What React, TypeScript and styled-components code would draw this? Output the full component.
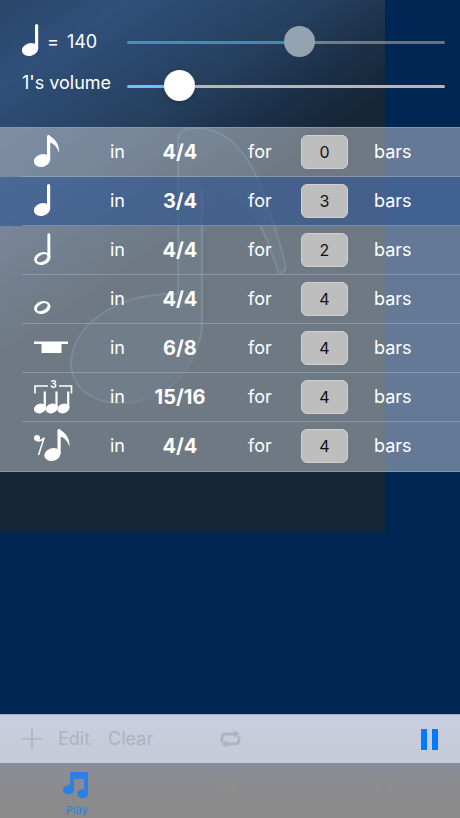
import React, { useState } from 'react';
import styled, { createGlobalStyle } from 'styled-components';

const GlobalStyle = createGlobalStyle`
  * { box-sizing: border-box; }
  body {
    margin: 0;
    background: #002654;
    color: #fff;
    font-family: Inter, 'Liberation Sans', sans-serif;
    font-size: 18px;
    line-height: 24px;
  }
  button, input { font: inherit; color: inherit; }
`;

const Page = styled.div`
  position: relative;
  isolation: isolate;
  display: flex;
  flex-direction: column;
  min-height: 100vh;
`;

const Backdrop = styled.svg`
  position: absolute;
  z-index: -1;
  top: 0;
  left: 0;
  width: 385px;
  height: 532px;
  background: linear-gradient(146deg, #2a4569 0%, #304f79 11%, #2c4a70 17%, #253f5d 28%, #1b3048 37%, #152636 45%);
`;

const Controls = styled.section`
  padding: 20px 15px 19px 22px;
`;

const ControlRow = styled.div`
  display: grid;
  grid-template-columns: 105px 1fr;
  align-items: center;
  height: 44px;
`;

const ControlLabel = styled.label<{ $raised?: boolean }>`
  display: flex;
  align-items: center;
  gap: 8px;
  white-space: nowrap;
  padding-bottom: ${(p) => (p.$raised ? 6 : 0)}px;
`;

const TempoNote = styled.svg`
  width: 17px;
  height: 36px;
  margin-bottom: 2px;
`;

const Slider = styled.input`
  appearance: none;
  width: 100%;
  height: 32px;
  margin: 0;
  background: transparent;

  &::-webkit-slider-runnable-track {
    height: 3px;
    border-radius: 2px;
    background: linear-gradient(to right, #67c4f5 var(--fill), #b9b7b5 var(--fill));
  }
  &::-webkit-slider-thumb {
    appearance: none;
    width: 31px;
    height: 31px;
    margin-top: -15px;
    border-radius: 50%;
    background: #fff;
    box-shadow: 0 2px 6px rgba(0, 0, 0, 0.2);
  }
  &:disabled { opacity: 0.54; }
  &:disabled::-webkit-slider-thumb {
    background: #f4faff;
    box-shadow: none;
  }
`;

const RowList = styled.ul`
  list-style: none;
  margin: 0;
  padding: 0;
  border-bottom: 1px solid #8497a9;
  border-top: 1px solid #8497a9;
`;

const Row = styled.li<{ $active: boolean }>`
  position: relative;
  display: grid;
  grid-template-columns: 76fr 16fr 122fr 53fr 73fr 86fr;
  align-items: center;
  height: 49px;
  padding-left: 34px;
  padding-bottom: 1px;
  background: ${(p) => (p.$active ? 'rgba(84, 116, 166, 0.76)' : 'rgba(222, 224, 228, 0.45)')};

  &:not(:last-child)::after {
    content: '';
    position: absolute;
    left: 22px;
    right: 0;
    bottom: 0;
    height: 1px;
    background: rgba(165, 182, 204, 0.5);
  }
`;

const NoteIcon = styled.svg`
  width: 40px;
  height: 36px;
  fill: #fff;
`;

const Signature = styled.button`
  padding: 0 14px 0 0;
  border: 0;
  background: none;
  font-size: 20px;
  font-weight: 700;
`;

const BarCount = styled.input`
  width: 47px;
  height: 34px;
  padding: 0;
  border: 1px solid #d0d0d0;
  border-radius: 6px;
  background: #bebebe;
  color: #111;
  font-size: 16px;
  text-align: center;
`;

const Toolbar = styled.div`
  display: flex;
  align-items: center;
  height: 49px;
  margin-top: auto;
  padding: 0 22px;
  border-top: 1px solid #a0a9bd;
  background: linear-gradient(#c8cfe1, #c6cad6);
`;

const ToolButton = styled.button<{ $gap?: number }>`
  display: flex;
  padding: 0;
  margin-left: ${(p) => p.$gap ?? 0}px;
  border: 0;
  background: none;
  color: #007aff;

  &:disabled { color: #adb3c0; }
`;

const Spacer = styled.div<{ $grow: number }>`
  flex: ${(p) => p.$grow} 1 0;
`;

const TabBar = styled.nav`
  display: grid;
  grid-template-columns: repeat(3, 1fr);
  height: 55px;
  background: linear-gradient(#8a8e99, #8b8b8d 50%, #8a8a8a);
`;

const Tab = styled.button<{ $selected?: boolean }>`
  display: flex;
  flex-direction: column;
  align-items: center;
  gap: 3px;
  padding: 8px 0 0;
  border: 0;
  background: none;
  color: ${(p) => (p.$selected ? '#2b80e4' : '#8e8d8c')};
  font-size: 11px;
  line-height: 16px;
`;

type NoteKind = 'eighth' | 'quarter' | 'half' | 'whole' | 'rest' | 'triplet' | 'restEighth';

const HeadAndStem = () => (
  <>
    <ellipse cx="8" cy="26.500" rx="8.300" ry="6.300" transform="rotate(-18 8 26.5)" />
    <path d="M13 2.700a1.600 1.600 0 0 1 3.200 0V25.500H13z" />
  </>
);

const Flag = () => <path d="M13 2.700Q14 .8 16 2.100C21 5 25.500 10.500 25 18.700C23 13 20 9.500 15.500 8.500z" />;

const HollowHead = () => (
  <path
    fillRule="evenodd"
    transform="rotate(-18 8.3 26.5)"
    d="M0 26.500a8.300 6.300 0 1 0 16.600 0a8.300 6.300 0 1 0-16.600 0zM2.500 26.800a5.900 3.300 -12 1 1 11.600-1.200a5.900 3.300 -12 1 1-11.600 1.200z"
  />
);

const noteShapes: Record<NoteKind, React.ReactNode> = {
  eighth: <><HeadAndStem /><Flag /></>,
  quarter: <HeadAndStem />,
  half: <><HollowHead /><path d="M13.400 2.700a1.400 1.400 0 0 1 2.900 0V25.500h-2.900z" /></>,
  whole: <HollowHead />,
  rest: <path d="M0 11.500h34v2.400h-6.500V23h-20v-9.100H0z" />,
  triplet: (
    <>
      <path d="M1 14.500V7H14M25 7H37.500V14.500" fill="none" stroke="#fff" strokeWidth="1.6" />
      <text x="19.500" y="9" fontSize="10" fontWeight="700" textAnchor="middle">3</text>
      {[0, 11.7, 23.4].map((x) => (
        <g key={x} transform={`translate(${x} 0)`}>
          <ellipse cx="6" cy="29.500" rx="6.200" ry="4.700" transform="rotate(-18 6 29.5)" />
          <path d="M9.700 12.500h2.200V29H9.700z" />
        </g>
      ))}
    </>
  ),
  restEighth: (
    <>
      <circle cx="3" cy="10" r="3" />
      <path d="M2 12Q6.500 14.500 10.200 9.700L4.500 27" fill="none" stroke="#fff" strokeWidth="1.5" />
      <g transform="translate(10.500 0)"><HeadAndStem /><Flag /></g>
    </>
  ),
};

const initialRows: { note: NoteKind; name: string; signature: string; bars: string }[] = [
  { note: 'eighth', name: 'Eighth note', signature: '4/4', bars: '0' },
  { note: 'quarter', name: 'Quarter note', signature: '3/4', bars: '3' },
  { note: 'half', name: 'Half note', signature: '4/4', bars: '2' },
  { note: 'whole', name: 'Whole note', signature: '4/4', bars: '4' },
  { note: 'rest', name: 'Bar rest', signature: '6/8', bars: '4' },
  { note: 'triplet', name: 'Triplet', signature: '15/16', bars: '4' },
  { note: 'restEighth', name: 'Rest and eighth note', signature: '4/4', bars: '4' },
];

const activeRow = 1;

const fillTo = (fraction: number) =>
  ({ '--fill': `${Math.round(fraction * 100)}%` }) as React.CSSProperties;

export default function App() {
  const tempo = 140;
  const [volume, setVolume] = useState(13);
  const [rows, setRows] = useState(initialRows);

  const setBars = (index: number, bars: string) =>
    setRows(rows.map((row, i) => (i === index ? { ...row, bars } : row)));

  return (
    <Page>
      <GlobalStyle />
      <Backdrop viewBox="0 0 385 532" fill="none" aria-hidden="true">
        <path
          d="M178 294V140Q178 127 198 128C232 129 252 160 264 195Q280 240 286 268Q283 275 278 272C268 235 245 190 202 180V325C200 365 165 403 120 403C90 403 71 386 71 362C74 322 120 292 178 294z"
          fill="rgba(105, 165, 200, 0.06)"
        />
        <g stroke="rgba(120, 180, 205, 0.2)" strokeWidth="2">
          <path d="M178 294V140Q178 127 198 128C232 129 252 160 264 195Q280 240 286 268Q283 275 278 272Q271 248 260 225" />
          <path d="M202 190V325Q202 335 198 345M120 403C90 403 71 386 71 362C74 322 120 292 178 294" />
        </g>
        <path d="M198 345C188 380 158 403 120 403" stroke="rgba(120, 180, 205, 0.1)" strokeWidth="2" />
      </Backdrop>

      <Controls>
        <ControlRow>
          <ControlLabel htmlFor="tempo">
            <TempoNote viewBox="0 0 17 36" fill="#fff" aria-hidden="true"><HeadAndStem /></TempoNote>
            <span>=</span>
            <span>{tempo}</span>
          </ControlLabel>
          <Slider id="tempo" type="range" min={20} max={240} value={tempo} disabled readOnly style={fillTo((tempo - 20) / 220)} />
        </ControlRow>
        <ControlRow>
          <ControlLabel htmlFor="volume" $raised>1's volume</ControlLabel>
          <Slider
            id="volume"
            type="range"
            min={0}
            max={100}
            value={volume}
            onChange={(e) => setVolume(Number(e.target.value))}
            style={fillTo(volume / 100)}
          />
        </ControlRow>
      </Controls>

      <RowList>
        {rows.map((row, i) => (
          <Row key={i} $active={i === activeRow}>
            <NoteIcon viewBox="0 0 40 36" role="img" aria-label={row.name}>{noteShapes[row.note]}</NoteIcon>
            <span>in</span>
            <Signature type="button">{row.signature}</Signature>
            <label htmlFor={`bars-${i}`}>for</label>
            <BarCount id={`bars-${i}`} inputMode="numeric" value={row.bars} onChange={(e) => setBars(i, e.target.value)} />
            <span>bars</span>
          </Row>
        ))}
      </RowList>

      <Toolbar>
        <ToolButton type="button" disabled aria-label="Add">
          <svg width="20" height="20" viewBox="0 0 20 20" stroke="currentColor" strokeWidth="1.6"><path d="M10 0v20M0 10h20" /></svg>
        </ToolButton>
        <ToolButton type="button" disabled $gap={16}>Edit</ToolButton>
        <ToolButton type="button" disabled $gap={18}>Clear</ToolButton>
        <Spacer $grow={3} />
        <ToolButton type="button" disabled aria-label="Repeat">
          <svg width="21" height="18" viewBox="0 0 21 18" fill="none" stroke="currentColor" strokeWidth="2.800">
            <path d="M2 12V8Q2 4 6 4H15M19 6V10Q19 14 15 14H6" />
            <path d="M14 0L19.500 4L14 8zM7 10L1.500 14L7 18z" fill="currentColor" stroke="none" />
          </svg>
        </ToolButton>
        <Spacer $grow={8} />
        <ToolButton type="button" aria-label="Pause">
          <svg width="17" height="21" viewBox="0 0 17 21" fill="currentColor"><path d="M0 0h6v21H0zM11 0h6v21h-6z" /></svg>
        </ToolButton>
      </Toolbar>

      <TabBar>
        <Tab type="button" $selected>
          <svg width="30" height="28" viewBox="0 0 30 28" fill="currentColor">
            <path d="M8 2.500Q8 1 9.500 1H24.500Q26 1 26 2.500V22.500A5.300 4.600 0 1 1 22 18.300V8H12V18.500A5.600 4.600 0 1 1 8 14.500z" />
          </svg>
          Play
        </Tab>
        <Tab type="button" aria-label="Second tab">
          <svg width="26" height="28" viewBox="0 0 26 28" fill="currentColor"><path d="M13 3l4 7h4v13H5V10h4z" opacity=".6" /></svg>
        </Tab>
        <Tab type="button" aria-label="Third tab">
          <svg width="26" height="28" viewBox="0 0 26 28" fill="none" stroke="currentColor" strokeWidth="4"><circle cx="13" cy="15" r="7" opacity=".6" /></svg>
        </Tab>
      </TabBar>
    </Page>
  );
}
